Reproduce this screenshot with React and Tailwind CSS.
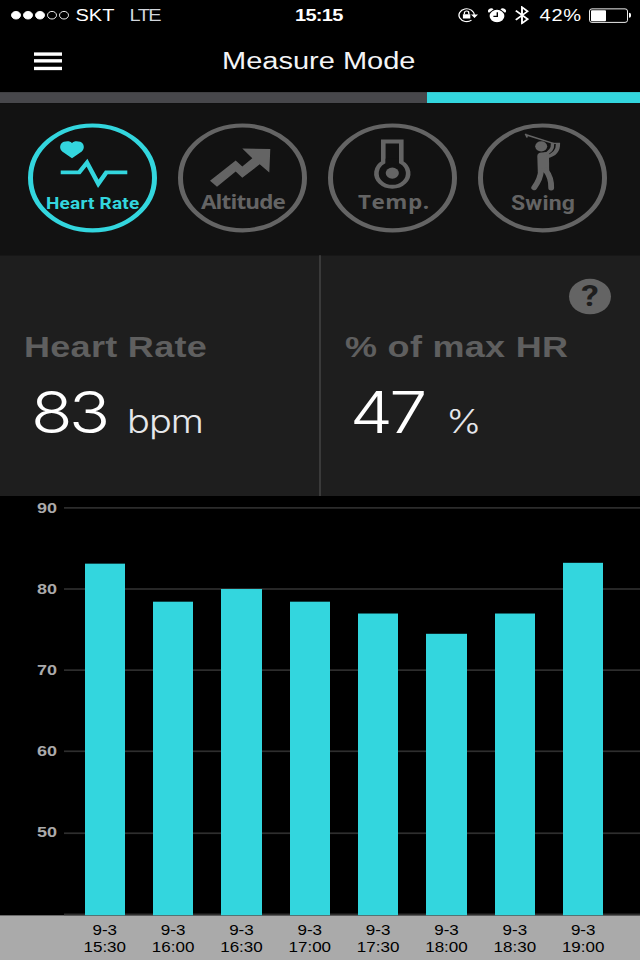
const tabs = [
    {
        name: "Heart Rate",
        icon: HeartRateIcon,
        color: "text-[#33d6de] border-[#33d6de]",
        label: "top-[85px] left-[18px] text-[19px] font-bold font-['Roboto'] tracking-[0.2px]"
    },
    {
        name: "Altitude",
        icon: AltitudeIcon,
        color: "text-[#646464] border-[#646464]",
        label: "top-[82px] left-[23px] text-[22.5px] font-bold font-['Open_Sans'] tracking-[-0.9px]"
    },
    {
        name: "Temp.",
        icon: TempIcon,
        color: "text-[#646464] border-[#646464]",
        label: "top-[82px] left-[30px] text-[22.5px] font-bold font-['Open_Sans'] tracking-[0.5px]"
    },
    {
        name: "Swing",
        icon: SwingIcon,
        color: "text-[#646464] border-[#646464]",
        label: "top-[83px] left-[33px] text-[23px] font-bold font-['Roboto'] tracking-[0.2px]"
    },
]

const stats = [
    { title: "Heart Rate", value: "83", unit: "bpm" },
    { title: "% of max HR", value: "47", unit: "%" },
]

const ticks = [90, 80, 70, 60, 50]

const readings = [
    { date: "9-3", time: "15:30", bpm: 83.1 },
    { date: "9-3", time: "16:00", bpm: 78.4 },
    { date: "9-3", time: "16:30", bpm: 80 },
    { date: "9-3", time: "17:00", bpm: 78.4 },
    { date: "9-3", time: "17:30", bpm: 77 },
    { date: "9-3", time: "18:00", bpm: 74.45 },
    { date: "9-3", time: "18:30", bpm: 77 },
    { date: "9-3", time: "19:00", bpm: 83.2 },
]

const UNIT = 9.615

function HeartRateIcon() {
    return (
        <svg viewBox="0 0 129 129" className="absolute -inset-[5px] w-[129px] h-[129px]" fill="none">
            <path fill="currentColor" d="M44 41.4 34.2 33.4C31 30 31.6 23.6 35.8 21.8 39 20.7 42.5 20.9 44 23.4 45.5 20.9 49 20.7 52.2 21.8 56.4 23.6 57 30 53.8 33.4Z" />
            <path stroke="currentColor" strokeWidth="4.6" d="M32.7 58H51.2L59 46.6 70.3 71.4 78.3 58H99.3" />
        </svg>
    )
}

function AltitudeIcon() {
    return (
        <svg viewBox="0 0 129 129" className="absolute -inset-[5px] w-[129px] h-[129px]">
            <path fill="currentColor" d="M64.3 29.6 92.3 30.4 91.3 58 81.7 48.5 64.3 64.3 57.7 56.8 39 74.9 32 67.8 57.7 43.8 64.3 50.9 74.3 41.4Z" />
        </svg>
    )
}

function TempIcon() {
    return (
        <svg viewBox="0 0 129 129" className="absolute -inset-[5px] w-[129px] h-[129px]" fill="none">
            <path stroke="currentColor" strokeWidth="4.6" d="M55.3 46V21.5H73.3V46A15.9 15.9 0 1 1 55.3 46Z" />
            <path fill="#121212" d="M57.6 42H71V50H57.6Z" />
            <circle cx="64.3" cy="58.8" r="6.6" fill="currentColor" />
        </svg>
    )
}

function SwingIcon() {
    return (
        <svg viewBox="0 0 129 129" className="absolute -inset-[5px] w-[129px] h-[129px]" fill="none" stroke="currentColor">
            <path strokeWidth="1.7" d="M47.4 12.2 49.2 16.8M48 13.4 76 24" />
            <circle cx="63.2" cy="27.2" r="6" fill="currentColor" stroke="none" />
            <path fill="currentColor" stroke="none" d="M59.3 38.5Q59.5 35 63.5 34.6L71 34 71.2 57.5H59.8Z" />
            <path strokeWidth="3.4" d="M66 36.5Q75 34 74.6 23.2" />
            <path strokeWidth="4.2" d="M68.5 39.5Q80.5 36.5 80 23.4" />
            <path strokeWidth="1.4" d="M73 23.7H82" />
            <path strokeWidth="5.8" strokeLinecap="round" d="M63 56Q62.5 66 56.2 76M67.8 55.5Q73.5 64 73.2 76.4" />
        </svg>
    )
}

const StatusBar = () => {
    return (
        <div className="flex h-10 shrink-0 items-center pb-1">
            <div className="ml-[11px] flex gap-[2.5px]">
                {[1, 2, 3, 4, 5].map((dot) => (
                    <span
                        key={dot}
                        className={`size-[9.5px] rounded-full border border-white ${dot < 4 ? "bg-white" : ""}`}
                    />
                ))}
            </div>
            <span className="ml-[7px] w-[54px] leading-none text-[20px]">SKT</span>
            <span className="w-[165.5px] leading-none text-[20px] tracking-[-1.5px] text-gray-300">LTE</span>
            <span className="w-[162.5px] leading-none text-[20px] font-bold tracking-[-0.7px]">15:15</span>

            <svg viewBox="0 0 20 18" className="h-[18px] w-5" fill="none" stroke="white" strokeWidth="1.3">
                <path d="M16.2 9A7.6 7.6 0 1 0 13.5 14.8" />
                <path fill="white" stroke="none" d="M13 8.2H20L16.5 12.4ZM4.9 8H12.3V13H4.9Z" />
                <path d="M6.4 8V6.3A2.2 2.2 0 0 1 10.8 6.3V8" />
            </svg>
            <svg viewBox="0 0 18 18" className="ml-[10px] h-[18px] w-[18px]" fill="white">
                <circle cx="9" cy="10" r="7.4" />
                <path d="M1 6.2A3 3 0 0 1 5.6 1.8ZM17 6.2A3 3 0 0 0 12.4 1.8Z" />
                <path stroke="black" strokeWidth="1.4" fill="none" d="M9.3 5.6V10.4H5.4" />
            </svg>
            <svg viewBox="0 0 14 22" className="ml-[9px] h-[22px] w-[14px]" fill="none" stroke="white" strokeWidth="1.9">
                <path d="M.8 5.6 12.6 15.6 7 20.5V1.5L12.6 6.4.8 16.4" />
            </svg>
            <span className="ml-[11px] w-[49px] leading-none text-[20px] tracking-[0.8px]">42%</span>
            <div className="h-[17px] w-[39px] rounded-[3px] border border-white p-px">
                <div className="h-full w-[15px] rounded-[1px] bg-white" />
            </div>
            <div className="ml-px h-[6px] w-[2.5px] rounded-r-full bg-white" />
        </div>
    )
}

const Header = () => {
    return (
        <header className="flex h-[69px] shrink-0 items-start">
            <button className="mt-[22px] ml-[34px] flex w-[28px] flex-col gap-[4.4px]">
                <span className="h-[4px] bg-white" />
                <span className="h-[4px] bg-white" />
                <span className="h-[4px] bg-white" />
            </button>
            <h1 className="mt-[18px] ml-[160px] text-[29px] leading-none text-gray-100 whitespace-nowrap">Measure Mode</h1>
        </header>
    )
}

const Tabs = () => {
    return (
        <nav className="flex h-[180px] shrink-0 gap-[21px] bg-[#121212] pt-[24px] pl-[28px]">
            {tabs.map((item) => (
                <button key={item.name} className={`relative size-[129px] rounded-full border-[5px] ${item.color}`}>
                    <item.icon />
                    <span className={`absolute -m-[5px] leading-none whitespace-nowrap ${item.label}`}>{item.name}</span>
                </button>
            ))}
        </nav>
    )
}

const Stats = () => {
    return (
        <section className="relative grid h-[285px] shrink-0 grid-cols-2 bg-[#1e1e1e]">
            {stats.map((item, i) => (
                <div key={item.title} className={`pt-[90px] ${i > 0 ? "border-l-2 border-[#3a3a3a] pl-[24px] -ml-px" : "pl-[24px]"}`}>
                    <h2 className="text-[36px] leading-none font-bold tracking-[0.3px] text-[#5f5f5f]">{item.title}</h2>
                    <div className={`mt-[25px] flex items-baseline font-['Inter'] leading-none font-[290] ${i > 0 ? "ml-[5px]" : "ml-[7px]"}`}>
                        <span className="w-[96px] text-[68px] tracking-[-3.5px]">{item.value}</span>
                        <span className="text-[38px] tracking-[-1px] text-gray-200">{item.unit}</span>
                    </div>
                </div>
            ))}
            <button className="absolute top-[28px] right-[29px] flex size-[42px] items-center justify-center rounded-full bg-[#646464] font-['Roboto'] text-[35px] leading-none font-bold text-[#1e1e1e]">?</button>
        </section>
    )
}

const Chart = () => {
    return (
        <section className="relative h-[496px] shrink-0 bg-black">
            <div className="pt-[5px]">
                {ticks.map((tick) => (
                    <div key={tick} className="flex h-[96.15px] items-start">
                        <span className="w-[64px] pl-[37px] text-[18px] leading-none font-bold text-[#aaa]">{tick}</span>
                        <span className="mt-[8.5px] h-[2px] flex-1 bg-[#2e2e2e]" />
                    </div>
                ))}
            </div>
            <div className="absolute right-0 bottom-0 left-[64px] h-[2px] bg-[#2e2e2e]" />
            {/* bars grow up from the 40 bpm line */}
            <div className="absolute inset-0 flex items-end gap-[27.95px] pl-[84.7px]">
                {readings.map((item) => (
                    <div
                        key={item.time}
                        className="w-[40.4px] bg-[#33d6de]"
                        style={{ height: (item.bpm - 40) * UNIT + 1 }}
                    />
                ))}
            </div>
        </section>
    )
}

const TimeAxis = () => {
    return (
        <footer className="flex flex-1 bg-[#aaa] pt-[7.5px] pl-[70.6px]">
            {readings.map((item) => (
                <div key={item.time} className="w-[68.35px] text-center text-[17px] leading-[21px] text-black">
                    <div>{item.date}</div>
                    <div>{item.time}</div>
                </div>
            ))}
        </footer>
    )
}

const App = () => {
    return (
        <div className="h-[960px] w-[640px] overflow-hidden bg-black">
            {/* 640x1136 phone screen fitted to a 960px tall frame */}
            <div className="flex h-[1136px] w-[640px] origin-top-left scale-y-[0.84507] flex-col bg-black font-['Liberation_Sans',sans-serif] text-white">
                <StatusBar />
                <Header />
                <div className="flex h-[12.5px] shrink-0 bg-[#47474b]">
                    <div className="ml-auto w-[213.5px] bg-[#33d6de]" />
                </div>
                <Tabs />
                <Stats />
                <Chart />
                <TimeAxis />
            </div>
        </div>
    );
};

export default App;
